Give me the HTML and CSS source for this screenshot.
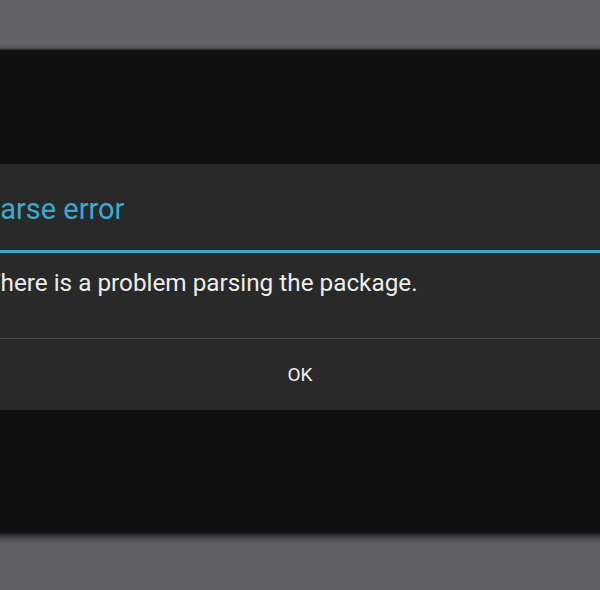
FILE: index.html
```html
<!DOCTYPE html>
<html>
<head>
<meta charset="utf-8">
<link rel="stylesheet" href="styles.css">
</head>
<body>
<div class="screen">
  <div class="band band-top"></div>
  <div class="stage">
    <div class="dialog">
      <div class="title">Parse error</div>
      <div class="message">There is a problem parsing the package.</div>
      <div class="buttons">
        <div class="button">OK</div>
      </div>
    </div>
  </div>
  <div class="band band-bottom"></div>
</div>
</body>
</html>
```
FILE: styles.css
```css
html, body {
  margin: 0;
  padding: 0;
  background: #616165;
}
.screen {
  width: 600px;
  height: 590px;
  overflow: hidden;
  display: flex;
  flex-direction: column;
  font-family: Roboto, "Noto Sans", sans-serif;
}
.band-top {
  height: 50px;
  flex: none;
  background: linear-gradient(#636367 0, #636367 44px, #535357 48px, #2a2a2e 50px);
}
.stage {
  height: 483px;
  flex: none;
  background: #101010;
  display: flex;
  flex-direction: column;
}
.band-bottom {
  flex: 1;
  background: linear-gradient(#1a1a1c 0, #4a4a4e 5px, #606064 11px, #616165 100%);
}
.dialog {
  margin-top: 114px;
  background: #292929;
  display: flex;
  flex-direction: column;
}
.title {
  height: 89px;
  box-sizing: border-box;
  margin-left: -18px;
  padding-top: 28px;
  line-height: 34px;
  color: #3ba9d0;
  font-size: 29px;
  border-bottom: 3px solid #39a8c9;
  white-space: nowrap;
}
.message {
  height: 86px;
  box-sizing: border-box;
  margin-left: -14px;
  padding-top: 16px;
  line-height: 28px;
  color: #ececec;
  font-size: 24.3px;
  border-bottom: 1px solid #4a4a4a;
  white-space: nowrap;
}
.buttons {
  height: 71px;
  display: flex;
}
.button {
  flex: 1;
  display: flex;
  align-items: center;
  justify-content: center;
  color: #f0f0f0;
  font-size: 19px;
}
```
